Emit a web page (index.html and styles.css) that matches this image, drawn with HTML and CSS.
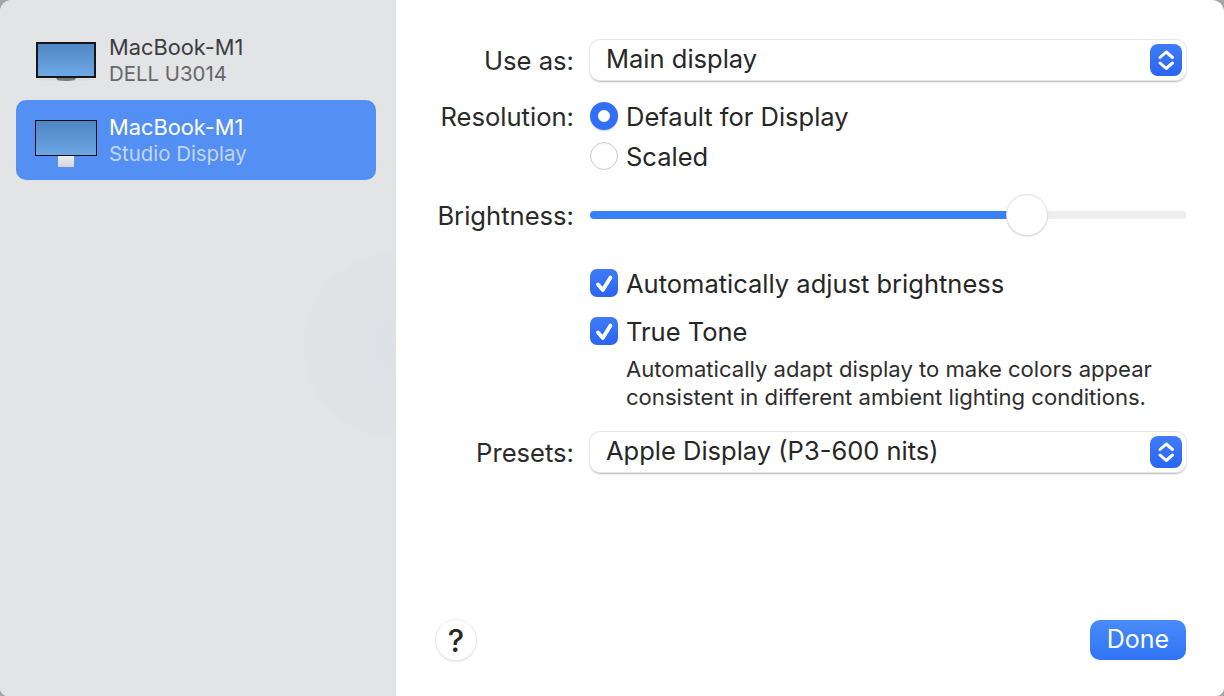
FILE: index.html
```html
<!DOCTYPE html>
<html lang="en">
<head>
<meta charset="utf-8">
<title>Displays</title>
<link rel="stylesheet" href="styles.css">
</head>
<body>
<div class="window">
  <aside class="sidebar">
    <div class="glow"></div>
    <div class="device">
      <svg class="monitor" width="64" height="42" viewBox="0 0 64 42">
        <defs>
          <linearGradient id="scr1" x1="0" y1="0" x2="0" y2="1"><stop offset="0" stop-color="#4f86c4"/><stop offset="1" stop-color="#6ea9e6"/></linearGradient>
        </defs>
        <ellipse cx="31" cy="37.5" rx="29" ry="1.2" fill="#d8d9db"/>
        <path d="M21 36h20l-1.5 2.2q-8.5 1.4-17 0z" fill="#77797c"/>
        <rect x="2" y="1" width="58" height="34" fill="url(#scr1)" stroke="#141618" stroke-width="2"/>
      </svg>
      <div class="device-text">
        <div class="device-name">MacBook-M1</div>
        <div class="device-sub">DELL U3014</div>
      </div>
    </div>
    <div class="device selected">
      <svg class="monitor" width="64" height="50" viewBox="0 0 64 50">
        <defs>
          <linearGradient id="scr2" x1="0" y1="0" x2="0" y2="1"><stop offset="0" stop-color="#4f84c2"/><stop offset="1" stop-color="#6ca6e4"/></linearGradient>
          <linearGradient id="std" x1="0" y1="0" x2="0" y2="1"><stop offset="0" stop-color="#eef0f3"/><stop offset="1" stop-color="#d3d5d8"/></linearGradient>
        </defs>
        <rect x="23" y="35" width="16" height="12" fill="url(#std)"/>
        <rect x="0.5" y="0.5" width="61" height="35" fill="url(#scr2)" stroke="#0c1016" stroke-width="1"/>
      </svg>
      <div class="device-text">
        <div class="device-name">MacBook-M1</div>
        <div class="device-sub">Studio Display</div>
      </div>
    </div>
  </aside>
  <main class="panel">
    <div class="form">
      <label class="label">Use as:</label>
      <div class="select">
        <span class="select-text">Main display</span>
        <span class="stepper"><svg width="32" height="32" viewBox="0 0 32 32"><path d="M10 13.5 16.2 8l6.3 5.5M10 19l6.2 5.5 6.3-5.5" fill="none" stroke="#fff" stroke-width="3" stroke-linecap="round" stroke-linejoin="round"/></svg></span>
      </div>

      <label class="label row-res">Resolution:</label>
      <div class="radios">
        <div class="option"><span class="radio on"></span>Default for Display</div>
        <div class="option"><span class="radio"></span>Scaled</div>
      </div>

      <label class="label row-bright">Brightness:</label>
      <div class="slider row-bright">
        <div class="fill"></div>
        <div class="track"></div>
        <div class="thumb"></div>
      </div>

      <div class="checks">
        <div class="option check-row"><span class="check"><svg width="28" height="28" viewBox="0 0 28 28"><path d="M8 15.5 12.8 21 20.5 8.5" fill="none" stroke="#fff" stroke-width="3.8" stroke-linecap="round" stroke-linejoin="round"/></svg></span>Automatically adjust brightness</div>
        <div class="option check-row tone"><span class="check"><svg width="28" height="28" viewBox="0 0 28 28"><path d="M8 15.5 12.8 21 20.5 8.5" fill="none" stroke="#fff" stroke-width="3.8" stroke-linecap="round" stroke-linejoin="round"/></svg></span>True Tone</div>
        <p class="note">Automatically adapt display to make colors appear<br>consistent in different ambient lighting conditions.</p>
      </div>

      <label class="label row-preset">Presets:</label>
      <div class="select row-preset">
        <span class="select-text">Apple Display (P3-600 nits)</span>
        <span class="stepper"><svg width="32" height="32" viewBox="0 0 32 32"><path d="M10 13.5 16.2 8l6.3 5.5M10 19l6.2 5.5 6.3-5.5" fill="none" stroke="#fff" stroke-width="3" stroke-linecap="round" stroke-linejoin="round"/></svg></span>
      </div>
    </div>
    <div class="footer">
      <button class="help">?</button>
      <button class="done">Done</button>
    </div>
  </main>
</div>
</body>
</html>
```

FILE: styles.css
```css
* { box-sizing: border-box; }
html, body { margin: 0; height: 100%; }
body {
  width: 1224px;
  height: 696px;
  overflow: hidden;
  background: #a4a4a4;
  font-family: Inter, "Liberation Sans", sans-serif;
  color: #262626;
}
.window {
  display: flex;
  width: 1224px;
  height: 696px;
  background: #fff;
  border-radius: 12px 12px 8px 8px;
  overflow: hidden;
}
.sidebar {
  position: relative;
  width: 396px;
  flex: none;
  padding: 20px 20px 0 16px;
  background: #e3e4e6;
  overflow: hidden;
}
.glow {
  position: absolute;
  left: 303px;
  top: 253px;
  width: 184px;
  height: 184px;
  border-radius: 50%;
  background: radial-gradient(circle, #dde1e5 0%, #dfe2e5 50%, #e1e3e6 78%, #e3e4e6 100%);
}
.device {
  position: relative;
  display: flex;
  align-items: flex-start;
  height: 80px;
  padding: 14px 0 0 19px;
  border-radius: 10px;
  color: #3d3d3d;
}
.device .monitor { flex: none; margin: 8px 0 0 0; }
.selected { background: #548ff3; color: #fff; }
.selected .monitor { margin-top: 6px; }
.device-text { margin-left: 10px; }
.device-name { font-size: 21.8px; line-height: 27px; }
.device-sub { font-size: 20.4px; line-height: 26px; color: #666768; }
.selected .device-sub { color: #c0d5f8; }
.panel {
  flex: 1;
  display: flex;
  flex-direction: column;
  justify-content: space-between;
  padding: 40px 38px 36px 40px;
}
.form {
  display: grid;
  grid-template-columns: 138px 1fr;
  column-gap: 16px;
  font-size: 25.5px;
}
.label {
  height: 40px;
  text-align: right;
  font-size: 25.6px;
  color: #2a2a2a;
  white-space: nowrap;
  line-height: 42px;
}
.select {
  display: flex;
  align-items: center;
  justify-content: space-between;
  height: 40px;
  padding: 0 4px 0 16px;
  background: #fff;
  border-radius: 10px;
  box-shadow: 0 0 0 1px #e8e8e8, 0 1.5px 1.5px #b5b5b5;
  font-size: 25.5px;
}
.select-text { padding-bottom: 3px; }
.stepper {
  display: flex;
  align-items: center;
  justify-content: center;
  width: 32px;
  height: 32px;
  border-radius: 8px;
  background: linear-gradient(#3f7cf7, #2a64f3);
}
.radios { grid-column: 2; margin-top: 16px; }
.row-res { margin-top: 16px; }
.radios .option { height: 40px; }
.option {
  display: flex;
  align-items: center;
  gap: 8px;
  font-size: 25.5px;
  color: #262626;
  white-space: nowrap;
}
.radio {
  width: 28px;
  height: 28px;
  border-radius: 50%;
  background: #fff;
  border: 1px solid #cdcdcd;
  box-shadow: inset 0 1px 2px #f0f0f0;
}
.radio.on {
  border: 8.5px solid #3170f5;
  box-shadow: 0 1px 2px rgba(49,112,245,.3);
}
.row-bright { margin-top: 19px; }
.slider {
  position: relative;
  height: 40px;
}
.slider .track, .slider .fill {
  position: absolute;
  top: 16px;
  height: 8px;
  border-radius: 4px;
}
.slider .track { left: 430px; right: 0; background: #eeeeee; box-shadow: inset 0 0 1px #ddd; }
.slider .fill { left: 0; width: 440px; background: #3880f6; }
.slider .thumb {
  position: absolute;
  left: 417px;
  top: 0;
  width: 40px;
  height: 40px;
  border-radius: 50%;
  background: #fff;
  box-shadow: 0 0 0 1px #e0e0e0, 0 1px 2px rgba(0,0,0,.3);
}
.checks { grid-column: 2; margin-top: 33px; }
.check-row { height: 30px; }
.tone { margin-top: 18px; }
.check {
  display: flex;
  align-items: center;
  justify-content: center;
  width: 28px;
  height: 28px;
  border-radius: 7px;
  background: linear-gradient(#3f7cf7, #2a64f3);
}
.note {
  margin: 9px 0 0 36px;
  font-size: 22.1px;
  line-height: 28px;
  color: #2e2e2e;
  white-space: nowrap;
}
.row-preset { margin-top: 21px; }
.footer { display: flex; justify-content: space-between; align-items: center; }
button { font-family: inherit; border: 0; cursor: pointer; padding: 0; }
.help {
  width: 40px;
  height: 40px;
  border-radius: 50%;
  background: #fff;
  box-shadow: 0 0 0 1px #ececec, 0 1px 2px rgba(0,0,0,.28);
  font-size: 31px;
  font-weight: 500;
  color: #262626;
}
.done {
  width: 96px;
  height: 40px;
  padding-bottom: 2px;
  border-radius: 10px;
  background: linear-gradient(#4a8bf8, #2f74f6);
  color: #fff;
  font-size: 25px;
}
```
